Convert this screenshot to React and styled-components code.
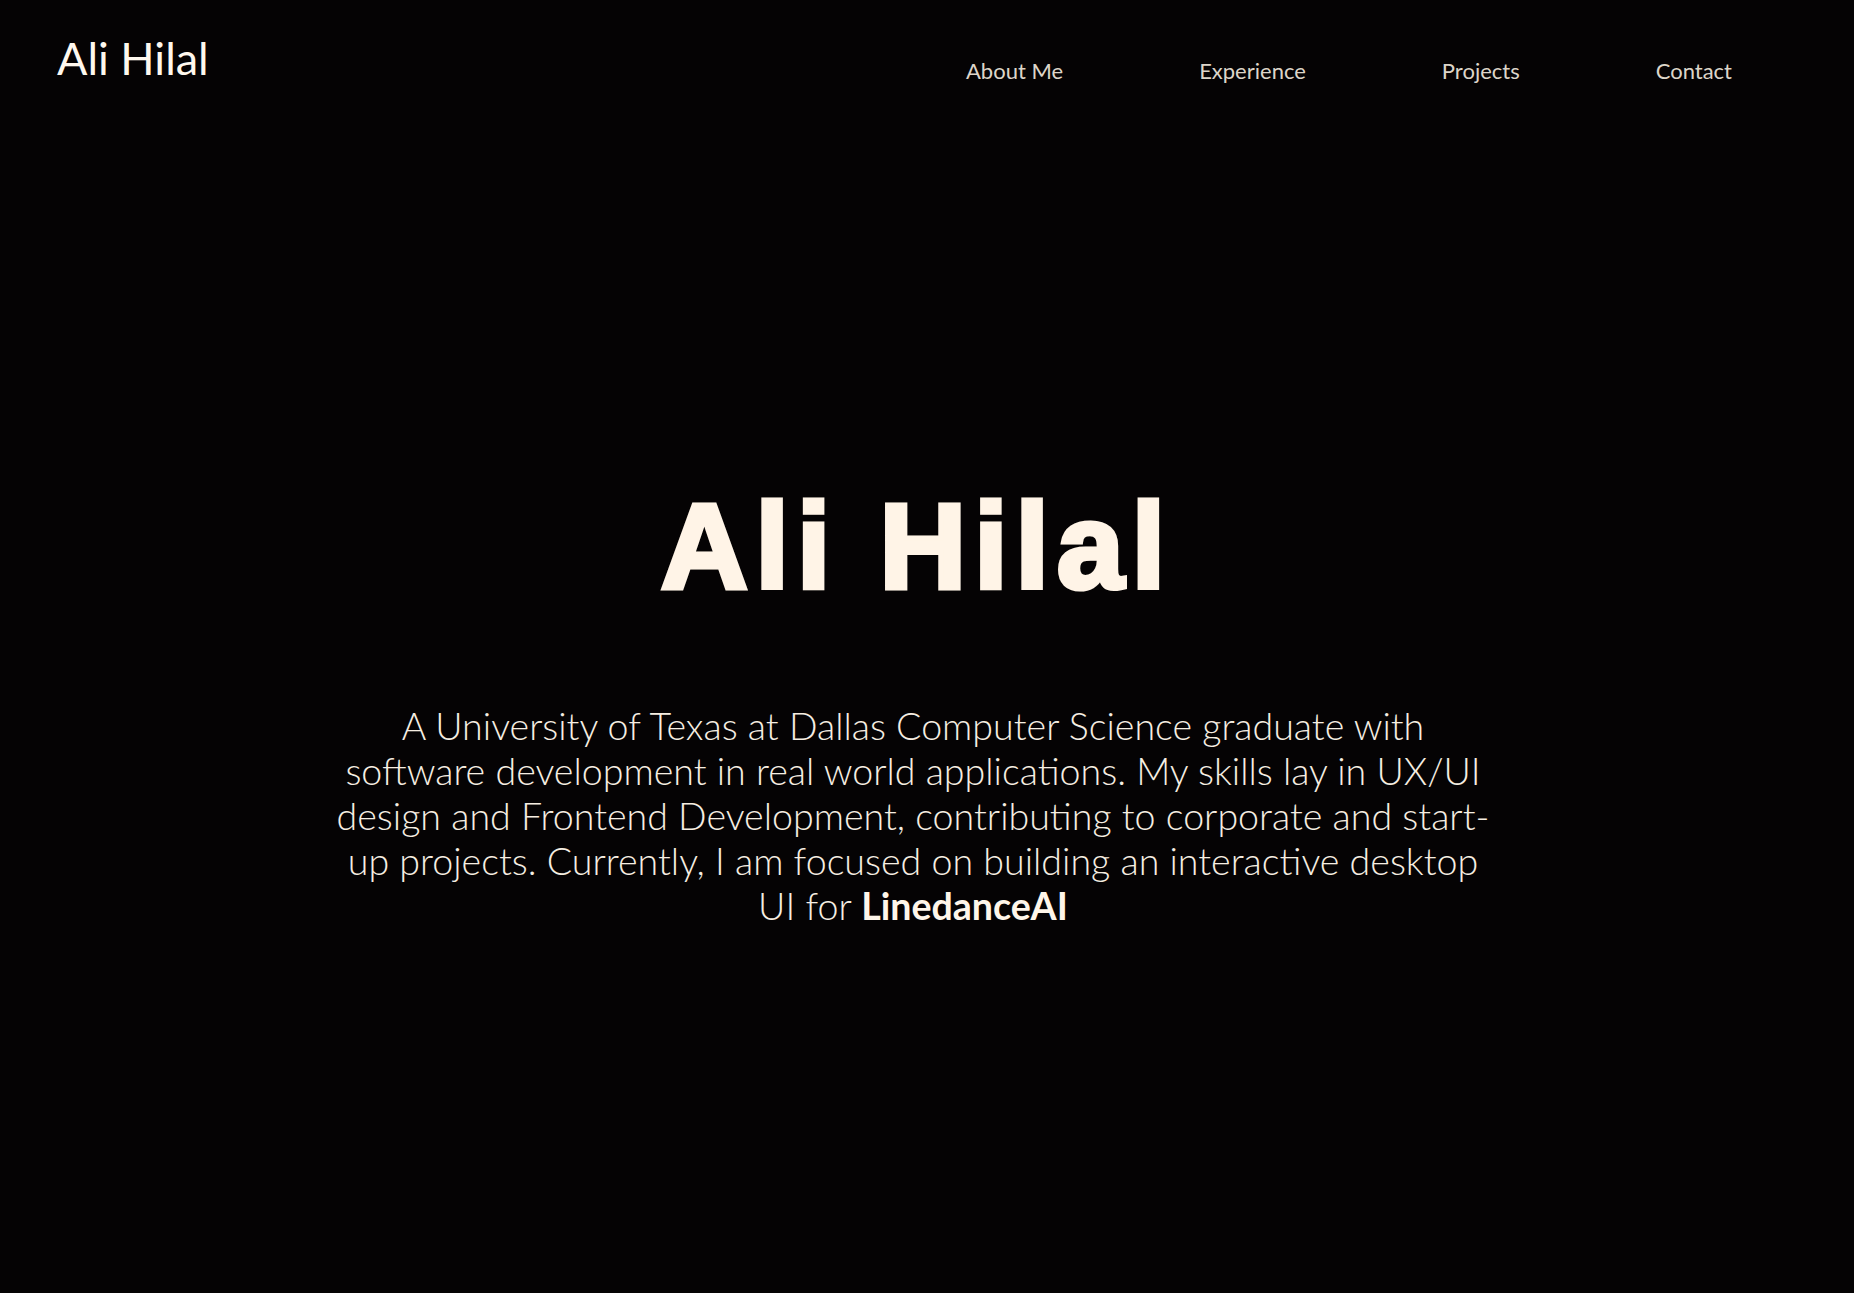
import React from "react"
import styled, { createGlobalStyle } from "styled-components"

const GlobalStyle = createGlobalStyle`
    html, body {
        margin: 0;
        padding: 0;
        background: #050304;
    }
    body {
        font-family: "Lato", "Open Sans", sans-serif;
        color: #fdf4e8;
        min-height: 1293px;
    }
`
const Page = styled.div`
    min-height: 1293px;
    background: #050304;
`
const Header = styled.header`
    display: flex;
    justify-content: space-between;
    align-items: flex-start;
    padding: 31px 122px 0 57px;
`
const Logo = styled.a`
    font-family: "Lato", sans-serif;
    font-size: 45px;
    font-weight: 400;
    line-height: 1.2;
    color: #fff8ee;
    text-decoration: none;
`
const Nav = styled.nav`
    display: flex;
    gap: 136px;
    margin-top: 27px;
`
const NavLink = styled.a`
    font-family: "Lato", sans-serif;
    font-size: 22px;
    line-height: 1.2;
    color: #ddd5c9;
    text-decoration: none;
`
const Hero = styled.main`
    display: flex;
    flex-direction: column;
    align-items: center;
    padding: 401px 28px 0 0;
`
const Title = styled.h1`
    margin: 0 0 0 8px;
    font-family: "Liberation Sans", Arial, sans-serif;
    font-size: 120px;
    font-weight: 700;
    line-height: 1;
    letter-spacing: 8px;
    color: #fff4e7;
    -webkit-text-stroke: 5px #fff4e7;
`
const Blurb = styled.p`
    margin: 97px 0 0;
    max-width: 1160px;
    font-family: "Lato", sans-serif;
    font-weight: 300;
    font-size: 37.6px;
    line-height: 45px;
    text-align: center;
    color: #f6eee2;
`
const Strong = styled.strong`
    font-weight: 700;
    color: #fff6ea;
`

export default function App() {
    return (
        <Page>
            <GlobalStyle />
            <Header>
                <Logo href="#">Ali Hilal</Logo>
                <Nav>
                    <NavLink href="#about">About Me</NavLink>
                    <NavLink href="#experience">Experience</NavLink>
                    <NavLink href="#projects">Projects</NavLink>
                    <NavLink href="#contact">Contact</NavLink>
                </Nav>
            </Header>
            <Hero>
                <Title>Ali Hilal</Title>
                <Blurb>
                    A University of Texas at Dallas Computer Science graduate with software development in real world applications. My skills lay in UX/UI design and Frontend Development, contributing to corporate and start-up projects. Currently, I am focused on building an interactive desktop UI for <Strong>LinedanceAI</Strong>
                </Blurb>
            </Hero>
        </Page>
    )
}
